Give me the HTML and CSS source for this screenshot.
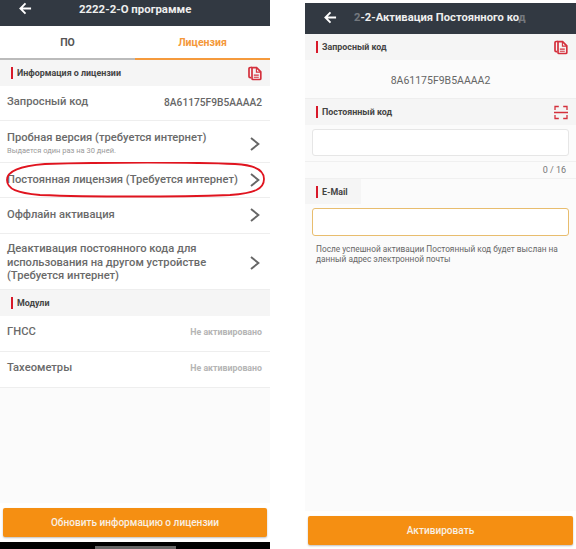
FILE: index.html
```html
<!DOCTYPE html>
<html lang="ru">
<head>
  <meta charset="UTF-8">
  <title>Лицензия</title>
  <link rel="stylesheet" href="styles.css">
</head>
<body>
  <svg class="defs" width="0" height="0">
    <symbol id="copy-icon" viewBox="0 0 14 14">
      <path d="M4 1H2.2Q1 1 1 2.2V10Q1 11.2 2.2 11.2H3" fill="none" stroke="currentColor" stroke-width="1.7"/>
      <path d="M4 1.2H8.6L12.8 5.4V12Q12.8 13 11.8 13H5Q4 13 4 12Z" fill="none" stroke="currentColor" stroke-width="1.7"/>
      <path d="M8.4 1.4V5.6H12.6M5.8 8.6H10.8M5.8 10.8H10.8" fill="none" stroke="currentColor" stroke-width="1.1"/>
    </symbol>
    <symbol id="arrow-back" viewBox="0 0 14 14">
      <path d="M13 7H2M7 1.5L1.5 7L7 12.5" fill="none" stroke="currentColor" stroke-width="2"/>
    </symbol>
    <symbol id="chevron" viewBox="0 0 10 14">
      <path d="M1 1L8.4 7L1 13" fill="none" stroke="currentColor" stroke-width="1.9"/>
    </symbol>
  </svg>

  <div class="phone phone-left">
    <header class="topbar">
      <svg class="back"><use href="#arrow-back"/></svg>
      <span class="topbar-title">2222-2-О программе</span>
    </header>
    <div class="tabs">
      <div class="tab">ПО</div>
      <div class="tab active">Лицензия</div>
    </div>
    <div class="section">
      <span class="section-name">Информация о лицензии</span>
      <svg class="red-icon"><use href="#copy-icon"/></svg>
    </div>
    <div class="row row-first">
      <span class="row-name">Запросный код</span>
      <span class="code">8A61175F9B5AAAA2</span>
    </div>
    <div class="row row-trial">
      <div>
        <div class="row-name">Пробная версия (требуется интернет)</div>
        <div class="row-hint">Выдается один раз на 30 дней.</div>
      </div>
      <svg class="chevron"><use href="#chevron"/></svg>
    </div>
    <div class="row row-perm">
      <span class="row-name">Постоянная лицензия (Требуется интернет)</span>
      <svg class="chevron"><use href="#chevron"/></svg>
      <svg class="circled" viewBox="0 0 261 36">
        <path d="M40 2C100 0 190 0 230 2C250 3 259 8 259 17C259 27 250 31 225 33C170 35 85 35 35 33C12 31 2 27 2 18C2 9 14 4 40 2Z" fill="none" stroke="#e0141f" stroke-width="1.8"/>
      </svg>
    </div>
    <div class="row row-offline">
      <span class="row-name">Оффлайн активация</span>
      <svg class="chevron"><use href="#chevron"/></svg>
    </div>
    <div class="row row-deact">
      <span class="row-name">Деактивация постоянного кода для<br>использования на другом устройстве<br>(Требуется интернет)</span>
      <svg class="chevron"><use href="#chevron"/></svg>
    </div>
    <div class="section">
      <span class="section-name">Модули</span>
    </div>
    <div class="row row-value">
      <span class="row-name">ГНСС</span>
      <span class="status">Не активировано</span>
    </div>
    <div class="row row-value">
      <span class="row-name">Тахеометры</span>
      <span class="status">Не активировано</span>
    </div>
    <div class="filler"></div>
    <div class="footer">
      <button class="main-btn">Обновить информацию о лицензии</button>
    </div>
    <div class="navbar"><span class="nav-pill"></span></div>
  </div>

  <div class="phone phone-right">
    <header class="topbar">
      <svg class="back"><use href="#arrow-back"/></svg>
      <span class="topbar-title"><span class="fade">2</span>-2-Активация Постоянного ко<span class="fade">д</span></span>
    </header>
    <div class="section">
      <span class="section-name">Запросный код</span>
      <svg class="red-icon"><use href="#copy-icon"/></svg>
    </div>
    <div class="code-line">8A61175F9B5AAAA2</div>
    <div class="section">
      <span class="section-name">Постоянный код</span>
      <svg class="red-icon" viewBox="0 0 14 14">
        <path d="M1 4.5V1H4.8M9.2 1H13V4.5M0 7H14M1 9.5V13H4.8M9.2 13H13V9.5" fill="none" stroke="currentColor" stroke-width="1.3"/>
      </svg>
    </div>
    <div class="field-wrap"><div class="field"></div></div>
    <div class="counter">0 / 16</div>
    <div class="email-head">
      <span class="section-name">E-Mail</span>
    </div>
    <div class="field-wrap"><div class="field field-focus"></div></div>
    <p class="note">После успешной активации Постоянный код будет выслан на данный адрес электронной почты</p>
    <div class="filler"></div>
    <div class="footer footer-right">
      <button class="main-btn">Активировать</button>
    </div>
  </div>
</body>
</html>
```

FILE: styles.css
```css
body {
  margin: 0;
  width: 576px;
  height: 549px;
  overflow: hidden;
  display: flex;
  justify-content: space-between;
  background: #fff;
  font-family: Roboto, "Noto Sans", sans-serif;
  color: #666;
}
.defs {
  position: absolute;
}
.phone {
  width: 270px;
  height: 549px;
  display: flex;
  flex-direction: column;
  background: #fbfbfb;
}
.phone-right {
  width: 271px;
  margin-top: 3px;
  height: 546px;
}
.topbar {
  height: 26px;
  padding-bottom: 9px;
  box-sizing: border-box;
  background: #323942;
  color: #fff;
  display: flex;
  align-items: center;
  flex-shrink: 0;
}
.phone-right .topbar {
  height: 31px;
  padding-bottom: 3px;
}
.back {
  width: 13px;
  height: 13px;
  margin-left: 19px;
}
.topbar-title {
  margin-left: 47px;
  font-size: 11.4px;
  font-weight: 700;
  color: #eee;
}
.phone-right .topbar-title {
  margin-left: 17px;
  font-size: 11.2px;
  width: 172px;
  white-space: nowrap;
  overflow: hidden;
}
.fade {
  opacity: 0.35;
}
.tabs {
  height: 34px;
  display: flex;
  background: #fff;
  border-bottom: 2px solid #bbb;
  box-sizing: border-box;
}
.tab {
  flex: 1;
  text-align: center;
  line-height: 34px;
  font-size: 10.5px;
  font-weight: 700;
  color: #555;
  margin-bottom: -2px;
}
.tab.active {
  color: #f4983a;
  border-bottom: 2px solid #f59a3c;
}
.section {
  height: 26px;
  background: #f5f5f5;
  display: flex;
  align-items: center;
  justify-content: space-between;
  padding: 0 8px 0 11px;
  flex-shrink: 0;
}
.section-name {
  border-left: 2px solid #d8192a;
  padding-left: 4px;
  font-size: 8.9px;
  font-weight: 700;
  line-height: 12px;
  color: #444;
}
.red-icon {
  width: 14px;
  height: 15px;
  color: #d4303c;
}
.row {
  position: relative;
  display: flex;
  align-items: center;
  justify-content: space-between;
  padding: 0 8px 0 7px;
  background: #fff;
  border-bottom: 1px solid #eee;
  box-sizing: border-box;
}
.row-first {
  height: 35px;
  padding-bottom: 2px;
}
.row-value {
  height: 36px;
  padding-bottom: 3px;
}
.row-trial {
  height: 42px;
  padding-top: 4px;
}
.row-perm {
  height: 35px;
  padding-bottom: 1px;
}
.row-offline {
  height: 36px;
  padding-bottom: 1px;
}
.row-deact {
  height: 56px;
  padding-top: 2px;
}
.row-name {
  font-size: 11.2px;
  font-weight: 500;
  line-height: 13.5px;
  color: #6a6a6a;
}
.row-hint {
  font-size: 7.5px;
  line-height: 11px;
  color: #999;
}
.code {
  font-size: 10.2px;
  font-weight: 500;
  color: #666;
}
.status {
  font-size: 8.8px;
  font-weight: 700;
  color: #b5b5b5;
}
.chevron {
  width: 10px;
  height: 14px;
  color: #666;
  margin-right: 2px;
}
.circled {
  position: absolute;
  left: 5px;
  top: -1px;
  width: 261px;
  height: 36px;
}
.filler {
  flex: 1;
}
.footer {
  padding: 5px 3px;
  background: #fff;
}
.footer-right {
  padding: 5px 3px 4px;
}
.main-btn {
  display: block;
  width: 100%;
  height: 29px;
  border: none;
  border-radius: 2px;
  background: #f58f12;
  color: #f8f0e4;
  font-family: inherit;
  font-size: 10.1px;
  font-weight: 500;
  box-shadow: 0 1px 2px rgba(0, 0, 0, 0.25);
}
.navbar {
  height: 7px;
  background: #000;
  display: flex;
  justify-content: center;
  align-items: flex-start;
}
.nav-pill {
  width: 81px;
  height: 4px;
  margin-top: 4px;
  background: #666;
}
.code-line {
  height: 39px;
  text-align: center;
  line-height: 41px;
  font-size: 10.5px;
  color: #666;
  border-bottom: 1px solid #eee;
  box-sizing: border-box;
}
.field-wrap {
  padding: 4px 7px 0;
  flex-shrink: 0;
}
.field {
  height: 27px;
  box-sizing: border-box;
  background: #fff;
  border: 1px solid #e6e6e6;
  border-radius: 3px;
}
.field-focus {
  height: 28px;
  border-color: #e8bd6e;
}
.counter {
  margin-top: 5px;
  height: 18px;
  box-sizing: border-box;
  line-height: 16px;
  text-align: right;
  padding-right: 10px;
  font-size: 9px;
  color: #777;
  border-top: 1px solid #f0f0f0;
  border-bottom: 1px solid #f0f0f0;
}
.email-head {
  width: 56px;
  height: 25px;
  background: #f5f5f5;
  display: flex;
  align-items: center;
  padding-left: 11px;
  box-sizing: border-box;
}
.note {
  margin: 8px 10px 0 11px;
  font-size: 8.3px;
  line-height: 10px;
  color: #666;
}
```
